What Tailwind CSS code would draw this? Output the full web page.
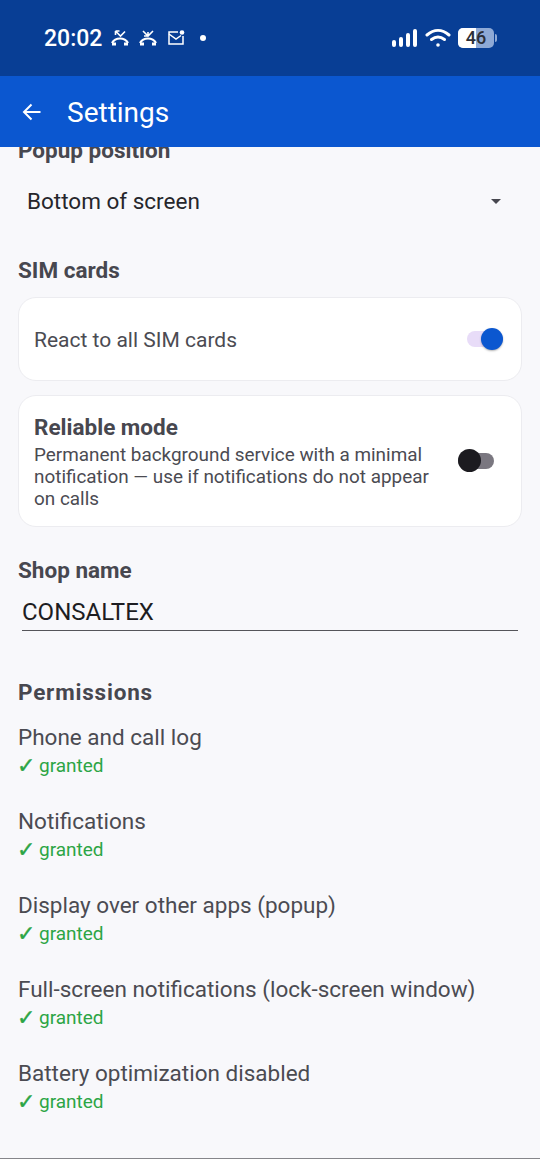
<!DOCTYPE html>
<html>
<head>
	<meta charset="utf-8">
	<meta name="viewport" content="width=device-width, initial-scale=1">
	<script src="https://cdn.jsdelivr.net/npm/@tailwindcss/browser@4"></script>
	<title>Settings</title>
</head>
<body class="bg-[#f8f8fb] font-['Roboto',sans-serif]">
<div class="w-[540px] h-[1159px] flex flex-col overflow-hidden">

	<!-- status bar -->
	<div class="h-[76px] shrink-0 bg-[#083e95] flex items-center justify-between pl-[44px] pr-[43px] text-white">
		<div class="flex items-center">
			<span class="text-[23px] font-medium leading-none">20:02</span>
			<svg class="w-[20px] h-[20px] ml-[8px]" viewBox="0 0 20 20" fill="none" stroke="white" stroke-width="1.6"><path d="M2 15c2-3.500 4-4.500 8-4.500s6 1 8 4.500" stroke-width="2.200"/><path d="M2 16h4M14 16h4" stroke-width="3.200"/><path d="M5.500 3l5 5L15 3.500M5.500 3v4M5.500 3h4"/></svg>
			<svg class="w-[20px] h-[20px] ml-[8px]" viewBox="0 0 20 20" fill="none" stroke="white" stroke-width="1.6"><path d="M2 15c2-3.500 4-4.500 8-4.500s6 1 8 4.500" stroke-width="2.200"/><path d="M2 16h4M14 16h4" stroke-width="3.200"/><path d="M5 3l5 5 5-5M10 8H6M10 8V4"/></svg>
			<svg class="w-[18px] h-[18px] ml-[9px]" viewBox="0 0 18 18" fill="none" stroke="white" stroke-width="1.500"><path d="M11 3H2v12h14V7"/><path d="M2 5l7 5 5-3.500"/><circle cx="15" cy="3.500" r="2.300" fill="white" stroke="none"/></svg>
			<span class="w-[6px] h-[6px] rounded-full bg-white ml-[15px]"></span>
		</div>
		<div class="flex items-center">
			<svg class="w-[26px] h-[20px]" viewBox="0 0 26 20" fill="white"><rect x="0" y="12" width="4" height="7" rx="2"/><rect x="7" y="9" width="4" height="10" rx="2"/><rect x="14" y="5" width="4" height="14" rx="2"/><rect x="21" y="1" width="4" height="18" rx="2"/></svg>
			<svg class="w-[26px] h-[20px] ml-[7px]" viewBox="0 0 26 20" fill="none" stroke="white" stroke-width="3" stroke-linecap="round"><path d="M2 7c7-6 15-6 22 0"/><path d="M6.500 11.500c4.500-3.500 8.500-3.500 13 0"/><circle cx="13" cy="17" r="1.800" fill="white" stroke="none"/></svg>
			<div class="ml-[7px] w-[36px] h-[20px] rounded-[5px] bg-[#8ea9d6] overflow-hidden relative flex items-center justify-center">
				<div class="absolute left-0 top-0 bottom-0 w-[18px] bg-white"></div>
				<span class="relative text-[#2c2f38] text-[18px] font-medium leading-none">46</span>
			</div>
			<span class="ml-[1px] w-[2px] h-[8px] rounded-r bg-[#8ea9d6]"></span>
		</div>
	</div>

	<!-- app bar -->
	<div class="h-[71px] shrink-0 bg-[#0b57d0] flex items-center text-white relative z-10">
		<svg class="w-[20px] h-[20px] ml-[22px]" viewBox="0 0 20 20" fill="none" stroke="white" stroke-width="2"><path d="M18.500 10H2M9.500 2.500L2 10l7.500 7.500"/></svg>
		<span class="ml-[25px] text-[28px] leading-[32px] pt-[3px]">Settings</span>
	</div>

	<!-- settings list -->
	<div class="flex-1 overflow-hidden px-[18px] border-b border-[#85858a]">
		<div class="mt-[-9px] text-[22.5px] font-bold text-[#47474f] leading-[24px]">Popup position</div>

		<div class="mt-[19px] h-[40px] flex items-center justify-between pl-[9px] pr-[21px]">
			<span class="text-[22.5px] text-[#26262b] leading-none">Bottom of screen</span>
			<span class="w-0 h-0 border-l-[5px] border-r-[5px] border-t-[5px] border-l-transparent border-r-transparent border-t-[#47474f]"></span>
		</div>

		<div class="mt-[36px] text-[22.5px] font-bold text-[#47474f] leading-[26px]">SIM cards</div>

		<div class="mt-[14px] h-[84px] bg-white rounded-[18px] border border-[#ececf0] flex items-center justify-between pl-[15px] pr-[18px]">
			<span class="text-[21px] text-[#4b4b52] leading-none pt-[3px]">React to all SIM cards</span>
			<div class="relative w-[36px] h-[16px] rounded-full bg-[#e8dcf8]">
				<span class="absolute right-0 top-[-3px] w-[22px] h-[22px] rounded-full bg-[#0b57d0] shadow-[0_1px_2px_rgba(0,0,0,0.3)]"></span>
			</div>
		</div>

		<div class="mt-[14px] h-[132px] bg-white rounded-[18px] border border-[#ececf0] flex items-center justify-between pl-[15px] pr-[27px]">
			<div class="w-[410px] pt-[2px]">
				<div class="text-[22.5px] font-bold text-[#47474f] leading-[26px]">Reliable mode</div>
				<div class="mt-[4px] text-[18.9px] text-[#4b4b52] leading-[22px]">Permanent background service with a minimal notification — use if notifications do not appear on calls</div>
			</div>
			<div class="relative w-[36px] h-[16px] rounded-full bg-[#7a7780]">
				<span class="absolute left-0 top-[-4px] w-[23px] h-[23px] rounded-full bg-[#1c1b20]"></span>
			</div>
		</div>

		<div class="mt-[30px] text-[22.5px] font-bold text-[#47474f] leading-[26px]">Shop name</div>
		<div class="mt-[14px] mx-[4px] h-[34px] border-b border-[#55555a] text-[24px] text-[#1d1d22] leading-[30px]">CONSALTEX</div>

		<div class="mt-[48px] text-[22.5px] tracking-[0.8px] font-bold text-[#47474f] leading-[26px]">Permissions</div>

		<div class="mt-[18px] flex flex-col gap-[28px]">
			<div>
				<div class="text-[22.5px] text-[#4b4b52] leading-[28px]">Phone and call log</div>
				<div class="h-[28px] pt-[2px] flex items-center text-[19px] text-[#2ca545] leading-[26px]"><span class="w-[22px] -ml-[1px] text-[22px] [-webkit-text-stroke:0.4px_#2ca545] font-['DejaVu_Sans',sans-serif]">✓</span>granted</div>
			</div>
			<div>
				<div class="text-[22.5px] text-[#4b4b52] leading-[28px]">Notifications</div>
				<div class="h-[28px] pt-[2px] flex items-center text-[19px] text-[#2ca545] leading-[26px]"><span class="w-[22px] -ml-[1px] text-[22px] [-webkit-text-stroke:0.4px_#2ca545] font-['DejaVu_Sans',sans-serif]">✓</span>granted</div>
			</div>
			<div>
				<div class="text-[22.5px] text-[#4b4b52] leading-[28px]">Display over other apps (popup)</div>
				<div class="h-[28px] pt-[2px] flex items-center text-[19px] text-[#2ca545] leading-[26px]"><span class="w-[22px] -ml-[1px] text-[22px] [-webkit-text-stroke:0.4px_#2ca545] font-['DejaVu_Sans',sans-serif]">✓</span>granted</div>
			</div>
			<div>
				<div class="text-[22.5px] text-[#4b4b52] leading-[28px]">Full-screen notifications (lock-screen window)</div>
				<div class="h-[28px] pt-[2px] flex items-center text-[19px] text-[#2ca545] leading-[26px]"><span class="w-[22px] -ml-[1px] text-[22px] [-webkit-text-stroke:0.4px_#2ca545] font-['DejaVu_Sans',sans-serif]">✓</span>granted</div>
			</div>
			<div>
				<div class="text-[22.5px] text-[#4b4b52] leading-[28px]">Battery optimization disabled</div>
				<div class="h-[28px] pt-[2px] flex items-center text-[19px] text-[#2ca545] leading-[26px]"><span class="w-[22px] -ml-[1px] text-[22px] [-webkit-text-stroke:0.4px_#2ca545] font-['DejaVu_Sans',sans-serif]">✓</span>granted</div>
			</div>
		</div>
	</div>
</div>
</body>
</html>
